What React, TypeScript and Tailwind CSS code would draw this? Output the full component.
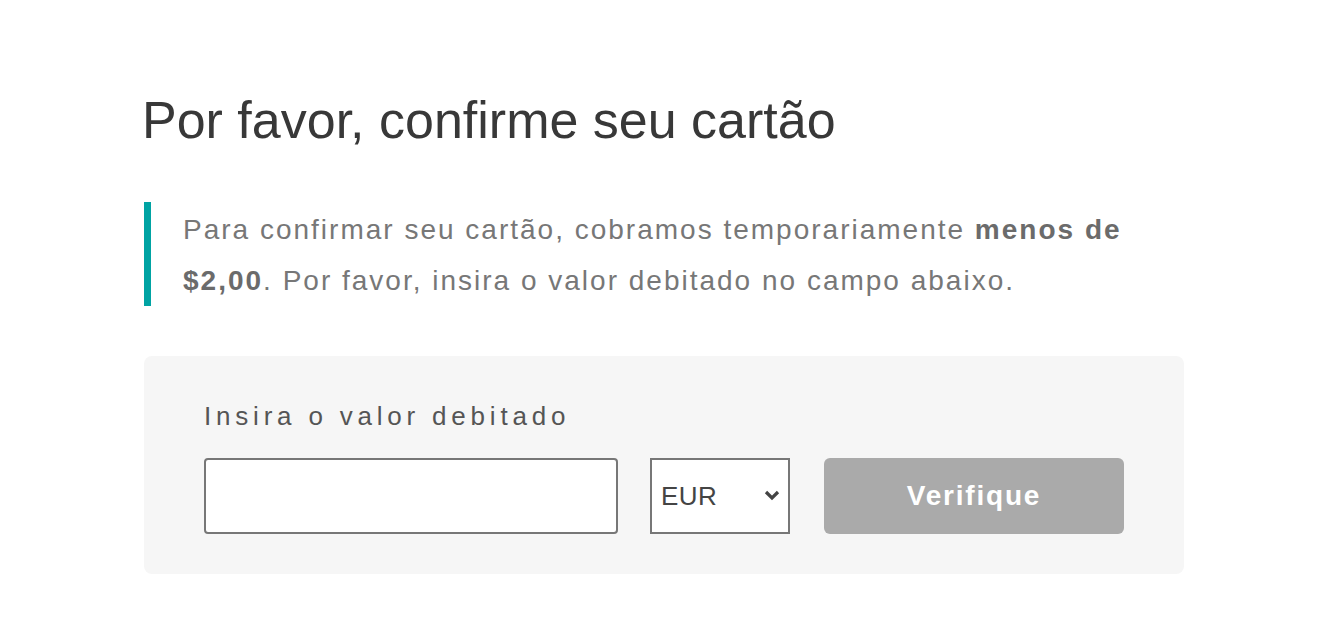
import { useState } from "react";

export default function App() {
  const [valor, setValor] = useState("");
  const [moeda, setMoeda] = useState("EUR");

  return (
    <div className="min-h-[626px] w-full bg-white font-['Liberation_Sans',Arial,sans-serif]">
      <div className="pl-[142px] pt-[86px] w-[1184px]">
        <h1 className="text-[52px] leading-[68px] text-[#383838]">
          Por favor, confirme seu cartão
        </h1>

        {/* aviso */}
        <div className="mt-[48px] ml-[2px] border-l-[7px] border-[#00a3a3] pl-[32px] pt-[2px]">
          <p className="text-[28px] leading-[51px] tracking-[2px] text-[#777777]">
            Para confirmar seu cartão, cobramos temporariamente{" "}
            <b className="font-bold text-[#6b6b6b]">menos de $2,00</b>. Por favor, insira o valor debitado no
            campo abaixo.
          </p>
        </div>

        {/* formulário */}
        <div className="mt-[50px] ml-[2px] bg-[#f6f6f6] rounded-[8px] px-[60px] pt-[40px] pb-[40px]">
          <label className="block text-[26px] leading-[40px] tracking-[4.8px] text-[#555555]">
            Insira o valor debitado
          </label>
          <div className="flex items-center mt-[22px]">
            <input
              type="text"
              value={valor}
              onChange={(e) => setValor(e.target.value)}
              className="w-[414px] h-[76px] bg-white border-2 border-[#777777] rounded-[4px] px-3 text-[26px] outline-none"
            />
            <div className="relative ml-[32px]">
              <select
                value={moeda}
                onChange={(e) => setMoeda(e.target.value)}
                className="appearance-none w-[140px] h-[76px] bg-white border-2 border-[#777777] pl-[9px] text-[26px] tracking-[0.5px] text-[#444444] outline-none"
              >
                <option>EUR</option>
                <option>USD</option>
                <option>BRL</option>
              </select>
              <svg
                className="absolute right-[9px] top-[31px] pointer-events-none"
                width="18"
                height="14"
                viewBox="0 0 18 14"
              >
                <path d="M3 3 L9 9 L15 3" fill="none" stroke="#444" strokeWidth="3.2" />
              </svg>
            </div>
            <button
              type="button"
              disabled
              className="ml-[34px] w-[300px] h-[76px] rounded-[6px] bg-[#aaaaaa] text-white text-[28px] tracking-[1.8px] font-bold"
            >
              Verifique
            </button>
          </div>
        </div>
      </div>
    </div>
  );
}
